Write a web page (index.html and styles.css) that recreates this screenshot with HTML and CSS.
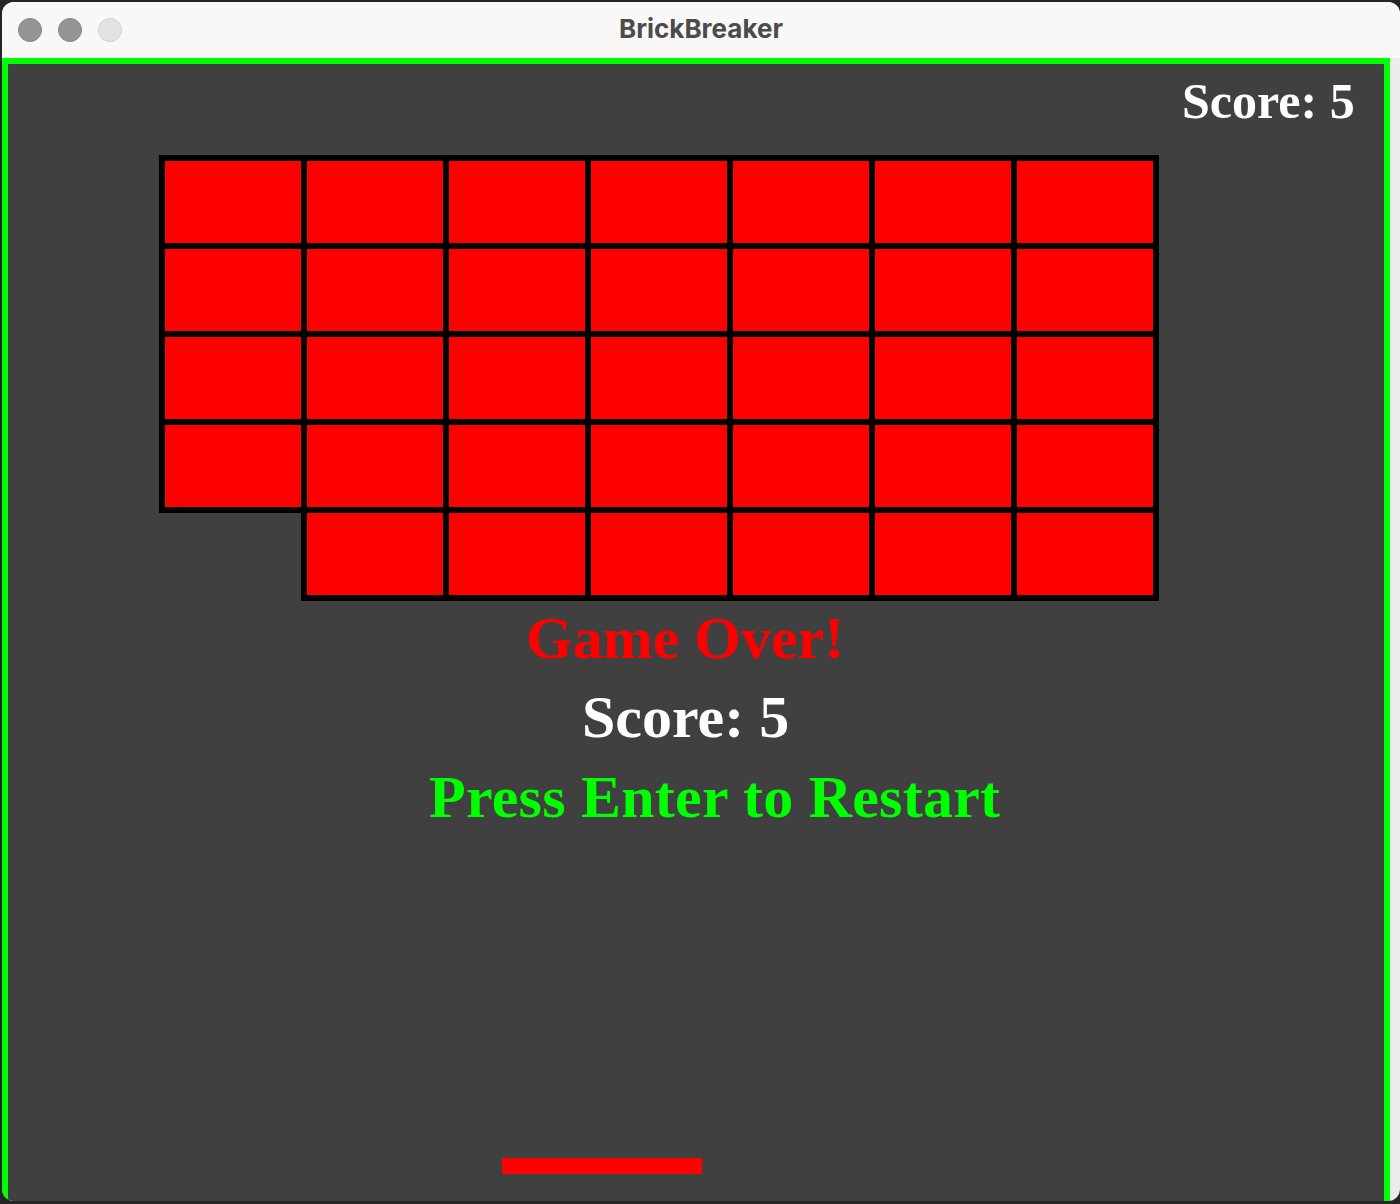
FILE: index.html
```html
<!DOCTYPE html>
<html lang="en">
<head>
<meta charset="utf-8">
<title>BrickBreaker</title>
<link rel="stylesheet" href="styles.css">
</head>
<body>
<div class="window">
  <header class="titlebar">
    <div class="lights">
      <span class="light light-dim"></span>
      <span class="light light-dim"></span>
      <span class="light light-off"></span>
    </div>
    <div class="title">BrickBreaker</div>
    <div class="spacer"></div>
  </header>
  <main class="canvas">
    <div class="score-top">Score: 5</div>
    <div class="bricks">
      <div class="brick"></div><div class="brick"></div><div class="brick"></div><div class="brick"></div><div class="brick"></div><div class="brick"></div><div class="brick"></div>
      <div class="brick"></div><div class="brick"></div><div class="brick"></div><div class="brick"></div><div class="brick"></div><div class="brick"></div><div class="brick"></div>
      <div class="brick"></div><div class="brick"></div><div class="brick"></div><div class="brick"></div><div class="brick"></div><div class="brick"></div><div class="brick"></div>
      <div class="brick"></div><div class="brick"></div><div class="brick"></div><div class="brick"></div><div class="brick"></div><div class="brick"></div><div class="brick"></div>
      <div class="brick brick-skip1"></div><div class="brick"></div><div class="brick"></div><div class="brick"></div><div class="brick"></div><div class="brick"></div>
    </div>
    <div class="msg msg-over">Game Over!</div>
    <div class="msg msg-score">Score: 5</div>
    <div class="msg msg-restart">Press Enter to Restart</div>
    <div class="paddle"></div>
  </main>
</div>
</body>
</html>
```
FILE: styles.css
```css
html, body {
  margin: 0;
  padding: 0;
}
body {
  background: #262626;
  width: 1400px;
  height: 1204px;
  overflow: hidden;
}
.window {
  margin: 2px 0 0 2px;
  width: 1398px;
  height: 1199px;
  border-radius: 12px;
  overflow: hidden;
  background: #ececec;
  display: flex;
  flex-direction: column;
}
.titlebar {
  height: 56px;
  flex: none;
  background: #f9f8f6;
  display: grid;
  grid-template-columns: 1fr auto 1fr;
  align-items: center;
}
.lights {
  display: flex;
  gap: 16px;
  padding-left: 16px;
}
.light {
  width: 22px;
  height: 22px;
  border-radius: 50%;
  display: block;
}
.light-dim {
  background: #959595;
  border: 1px solid #858585;
}
.light-off {
  background: #e3e3e1;
  border: 1px solid #d0d0ce;
}
.title {
  font-family: Inter, "Liberation Sans", sans-serif;
  font-weight: 700;
  font-size: 26px;
  color: #4b4b4b;
  line-height: 1;
  padding-bottom: 3px;
}
.canvas {
  width: 1376px;
  flex: 1;
  background: #404040;
  border: 6px solid #00ff00;
  border-bottom: none;
  font-family: "Liberation Serif", "Times New Roman", serif;
  font-weight: 700;
}
.score-top {
  font-size: 50px;
  line-height: 50px;
  color: #ffffff;
  padding-top: 12px;
  padding-left: 1174px;
  white-space: nowrap;
}
.bricks {
  margin-top: 29px;
  margin-left: 151px;
  display: grid;
  grid-template-columns: repeat(7, 142px);
  grid-template-rows: repeat(5, 88px);
  width: 994px;
  padding-bottom: 6px;
}
.brick {
  width: 136px;
  height: 82px;
  background: #ff0000;
  border: 6px solid #000000;
}
.brick-skip1 {
  grid-column-start: 2;
}
.msg {
  font-size: 60px;
  line-height: 60px;
  white-space: nowrap;
}
.msg-over {
  color: #ff0000;
  margin-top: 7px;
  padding-left: 518px;
}
.msg-score {
  color: #ffffff;
  margin-top: 19px;
  padding-left: 574px;
}
.msg-restart {
  color: #00ff00;
  margin-top: 20px;
  padding-left: 421px;
  letter-spacing: 0.24px;
}
.paddle {
  margin-top: 331px;
  margin-left: 494px;
  width: 200px;
  height: 16px;
  background: #ff0000;
}
```
